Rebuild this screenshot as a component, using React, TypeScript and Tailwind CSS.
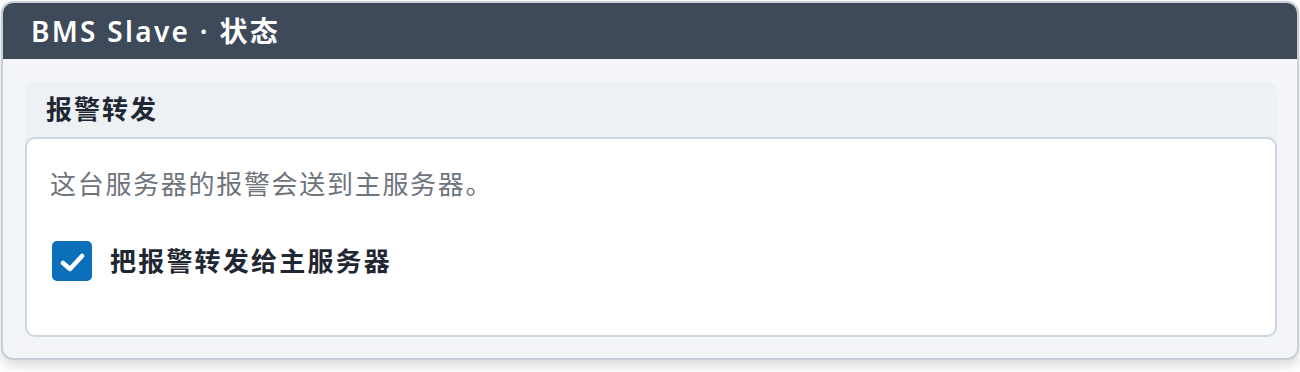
import React, { useState } from "react";

const fontStack = { fontFamily: '"Noto Sans", "Noto Sans CJK SC", sans-serif' };

const CheckIcon = () => (
  <svg viewBox="0 0 40 40" className="w-full h-full" fill="none">
    <path
      d="M11 22 L18 28 L30 15"
      stroke="white"
      strokeWidth={4.5}
      strokeLinecap="round"
      strokeLinejoin="round"
    />
  </svg>
);

const App: React.FC = () => {
  const [forward, setForward] = useState(true);

  return (
    <div className="bg-white h-[372px] px-[1px] pt-[1px]" style={fontStack}>
      <div className="rounded-[12px] border-2 border-[#c8cfd9] bg-[#f3f5f8] overflow-hidden shadow-[0_6px_12px_rgba(0,0,0,0.14)]">
        {/* Header */}
        <div className="h-[56px] bg-[#3e4a59] flex items-center pl-[28px]">
          <h1 className="text-white text-[28px] font-semibold tracking-[2.3px] leading-none">
            BMS Slave · 状态
          </h1>
        </div>

        {/* Body */}
        <div className="pl-[22px] pr-[20px] pt-[23px] pb-[21px]">
          <div className="rounded-[10px] bg-[#edf1f4]">
            <div className="h-[55px] flex items-center px-[21px]">
              <h2 className="text-[26px] font-semibold tracking-[2px] text-[#1f2733]">
                报警转发
              </h2>
            </div>

            <div className="h-[200px] rounded-[10px] border-2 border-[#cfd6df] bg-white px-[23px] pt-[26px] flex flex-col gap-[37px]">
              <p className="text-[26px] tracking-[1.7px] leading-[39px] text-[#6e747c]">
                这台服务器的报警会送到主服务器。
              </p>

              <label className="flex items-center gap-[18px] cursor-pointer">
                <button
                  type="button"
                  onClick={() => setForward((v) => !v)}
                  className={`w-[40px] h-[40px] rounded-[5px] ml-[2px] ${
                    forward ? "bg-[#0b70b9]" : "bg-white border-2 border-[#9aa4b1]"
                  }`}
                >
                  {forward && <CheckIcon />}
                </button>
                <span className="text-[26px] font-semibold tracking-[2.2px] text-[#1f2733]">
                  把报警转发给主服务器
                </span>
              </label>
            </div>
          </div>
        </div>
      </div>
    </div>
  );
};

export default App;
